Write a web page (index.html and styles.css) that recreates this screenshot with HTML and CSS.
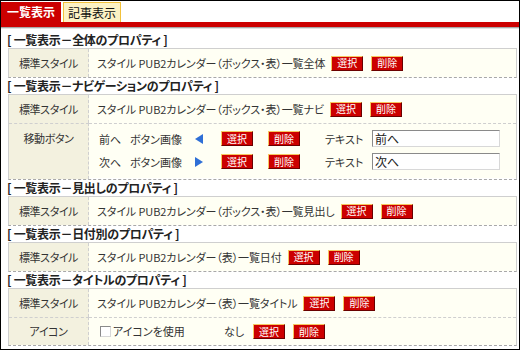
FILE: index.html
```html
<!DOCTYPE html>
<html lang="ja">
<head>
<meta charset="utf-8">
<link rel="stylesheet" href="styles.css">
</head>
<body>
<div class="frame">
  <div class="tabs">
    <div class="tab active">一覧表示</div>
    <div class="tab">記事表示</div>
  </div>
  <div class="bar"></div>
  <div class="content">
    <div class="sec-title">[ 一覧表示－全体のプロパティ ]</div>
    <div class="box">
      <div class="label">標準スタイル</div>
      <div class="value"><span class="txt">スタイル PUB2カレンダー（ボックス・表）一覧全体</span><span class="btn">選択</span><span class="btn">削除</span></div>
    </div>

    <div class="sec-title">[ 一覧表示－ナビゲーションのプロパティ ]</div>
    <div class="box">
      <div class="label">標準スタイル</div>
      <div class="value"><span class="txt">スタイル PUB2カレンダー（ボックス・表）一覧ナビ</span><span class="btn">選択</span><span class="btn">削除</span></div>
      <div class="label top">移動ボタン</div>
      <div class="value nav">
        <div class="navrow">
          <span class="dir">前へ</span><span class="img">ボタン画像</span><span class="tri left"></span><span class="btn">選択</span><span class="btn wide">削除</span><span class="tx">テキスト</span><span class="input">前へ</span>
        </div>
        <div class="navrow">
          <span class="dir">次へ</span><span class="img">ボタン画像</span><span class="tri right"></span><span class="btn">選択</span><span class="btn wide">削除</span><span class="tx">テキスト</span><span class="input">次へ</span>
        </div>
      </div>
    </div>

    <div class="sec-title">[ 一覧表示－見出しのプロパティ ]</div>
    <div class="box">
      <div class="label">標準スタイル</div>
      <div class="value"><span class="txt">スタイル PUB2カレンダー（ボックス・表）一覧見出し</span><span class="btn">選択</span><span class="btn">削除</span></div>
    </div>

    <div class="sec-title">[ 一覧表示－日付別のプロパティ ]</div>
    <div class="box">
      <div class="label">標準スタイル</div>
      <div class="value"><span class="txt">スタイル PUB2カレンダー（表）一覧日付</span><span class="btn">選択</span><span class="btn">削除</span></div>
    </div>

    <div class="sec-title">[ 一覧表示－タイトルのプロパティ ]</div>
    <div class="box">
      <div class="label">標準スタイル</div>
      <div class="value"><span class="txt">スタイル PUB2カレンダー（表）一覧タイトル</span><span class="btn">選択</span><span class="btn">削除</span></div>
      <div class="label short">アイコン</div>
      <div class="value short"><span class="check"></span><span class="chk-label">アイコンを使用</span><span class="none">なし</span><span class="btn">選択</span><span class="btn">削除</span></div>
    </div>
  </div>
</div>
</body>
</html>
```

FILE: styles.css
```css
html, body {
  margin: 0;
  padding: 0;
  background: #fff;
}
body {
  font-family: "Noto Sans CJK JP", "Noto Sans", sans-serif;
  font-size: 12px;
  color: #333;
  font-feature-settings: "palt";
}
.frame {
  width: 520px;
  height: 350px;
  box-sizing: border-box;
  border: 1px solid #000;
  overflow: hidden;
}
.tabs {
  display: flex;
  height: 21px;
  padding-top: 1px;
  box-sizing: border-box;
  align-items: stretch;
}
.tab {
  box-sizing: border-box;
  display: flex;
  align-items: center;
  justify-content: center;
  font-size: 12px;
  line-height: 1;
}
.tab.active {
  width: 60px;
  background: #cc0000;
  color: #fff;
  font-weight: bold;
}
.tab:not(.active) {
  width: 58px;
  margin-left: 2px;
  background: #fcf2c4;
  border: 1px solid #f2c13a;
  border-bottom: none;
  color: #111;
}
.bar {
  height: 5px;
  background: #cc0000;
  border-bottom: 1px solid #a9a9a9;
  box-shadow: 0 1px 0 #e2e2e2;
}
.content {
  padding: 4px 2px 0 7px;
}
.sec-title {
  height: 16px;
  line-height: 16px;
  font-weight: bold;
  color: #222;
  margin-left: -1px;
  white-space: nowrap;
  letter-spacing: -0.3px;
}
.box {
  display: grid;
  grid-template-columns: 80px 1fr;
  border: 1px solid #cfcfcf;
  border-bottom: 1px dashed #a8a8a8;
  font-size: 11px;
}
.label {
  background: #f3f1df;
  border-right: 1px dashed #cfcfcf;
  height: 28px;
  line-height: 28px;
  text-align: center;
  color: #333;
  letter-spacing: -0.4px;
}
.value {
  background: #fffff4;
  height: 28px;
  display: flex;
  align-items: center;
  padding-left: 8px;
  white-space: nowrap;
}
.label.top, .value.nav {
  height: 55px;
  border-top: 1px dashed #cfcfcf;
}
.label.short, .value.short {
  height: 27px;
  line-height: 27px;
  border-top: 1px dashed #cfcfcf;
}
.txt {
  margin-right: 6px;
  letter-spacing: -0.1px;
}
.btn {
  display: inline-flex;
  align-items: center;
  justify-content: center;
  box-sizing: border-box;
  width: 32px;
  height: 15px;
  background: #cc0000;
  color: #fff;
  font-size: 10px;
  line-height: 1;
  border: 1px solid;
  border-color: #f6c760 #6a0000 #6a0000 #f6c760;
  margin-right: 8px;
}
.value.nav {
  flex-direction: column;
  align-items: flex-start;
  justify-content: flex-start;
  padding-top: 6px;
  padding-left: 10px;
  box-sizing: border-box;
  gap: 6px;
}
.navrow {
  display: flex;
  align-items: center;
  height: 17px;
}
.dir { width: 31px; }
.img { width: 65px; }
.tri {
  width: 0;
  height: 0;
  border-top: 5px solid transparent;
  border-bottom: 5px solid transparent;
  margin-right: 18px;
}
.tri.left {
  border-right: 8px solid #2f6fd6;
}
.tri.right {
  border-left: 8px solid #2f6fd6;
}
.btn.wide { margin-left: 7px; margin-right: 25px; }
.tx { width: 47px; }
.input {
  box-sizing: border-box;
  width: 128px;
  height: 17px;
  line-height: 15px;
  border: 1px solid;
  border-color: #8a8a8a #d8d8d8 #d8d8d8 #8a8a8a;
  background: #fff;
  padding-left: 2px;
  color: #222;
  font-size: 12px;
}
.value.short {
  padding-left: 11px;
}
.check {
  box-sizing: border-box;
  width: 11px;
  height: 11px;
  border: 1px solid;
  border-color: #8a8a8a #d8d8d8 #d8d8d8 #8a8a8a;
  background: #fff;
  margin-right: 2px;
}
.chk-label { width: 111px; }
.none { margin-right: 9px; }
```
